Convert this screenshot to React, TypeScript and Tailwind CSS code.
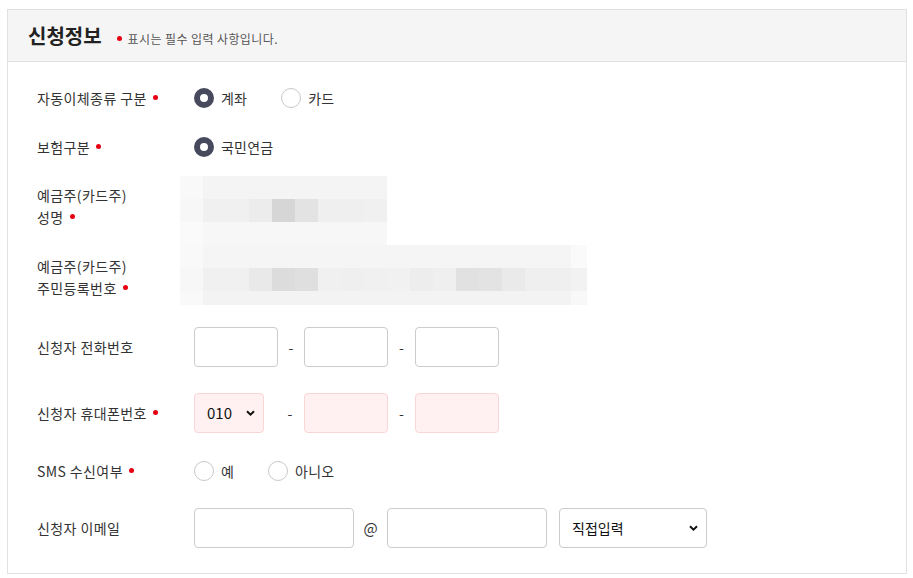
import React from 'react'

const font = "font-['Noto_Sans_CJK_KR','Noto_Sans',sans-serif]"

const Req = () => (
  <span className="ml-[6px] inline-block h-[5px] w-[5px] -translate-y-[3px] rounded-full bg-[#e60012] align-middle" />
)

interface RadioProps {
  label: string
  checked?: boolean
}

const Radio = ({ label, checked = false }: RadioProps) => (
  <label className="mr-[34px] flex items-center gap-[7px]">
    <span
      className={
        'block h-[20px] w-[20px] rounded-full ' +
        (checked ? 'border-[6px] border-[#464a5c] bg-white' : 'border border-[#c9c9c9] bg-white')
      }
    />
    <span className="text-[14px] leading-[20px] tracking-[0.2px] text-[#333]">{label}</span>
  </label>
)

const Chevron = () => (
  <svg width="9" height="6" viewBox="0 0 9 6" className="pointer-events-none absolute top-1/2 right-[9px] -translate-y-1/2">
    <path d="M1 1.2 L4.5 4.6 L8 1.2" fill="none" stroke="#111" strokeWidth="2" />
  </svg>
)

const Box = ({ w, pink = false }: { w: string; pink?: boolean }) => (
  <input
    className={
      'h-[40px] rounded-[4px] border outline-none ' +
      w +
      (pink ? ' border-[#fbd6d6] bg-[#fff1f1]' : ' border-[#cccccc] bg-white')
    }
  />
)

// pixelated blur cells (23px each)
const blurTop = [
  ['bg-[#f9f9f9]', 'bg-[#f4f4f4]', 'bg-[#f4f4f4]', 'bg-[#f4f4f4]', 'bg-[#f4f4f4]', 'bg-[#f4f4f4]', 'bg-[#f4f4f4]', 'bg-[#f4f4f4]', 'bg-[#f4f4f4]'],
  ['bg-[#f7f7f7]', 'bg-[#f0f0f0]', 'bg-[#f0f0f0]', 'bg-[#ececec]', 'bg-[#d6d6d6]', 'bg-[#e3e3e3]', 'bg-[#efefef]', 'bg-[#efefef]', 'bg-[#f0f0f0]'],
  ['bg-[#fafafa]', 'bg-[#f7f7f7]', 'bg-[#f7f7f7]', 'bg-[#f7f7f7]', 'bg-[#f7f7f7]', 'bg-[#f7f7f7]', 'bg-[#f7f7f7]', 'bg-[#f7f7f7]', 'bg-[#f7f7f7]'],
]

const blurBottom = [
  ['bg-[#f9f9f9]', 'bg-[#f5f5f5]', 'bg-[#f5f5f5]', 'bg-[#f5f5f5]', 'bg-[#f5f5f5]', 'bg-[#f5f5f5]', 'bg-[#f5f5f5]', 'bg-[#f5f5f5]', 'bg-[#f5f5f5]', 'bg-[#f5f5f5]', 'bg-[#f5f5f5]', 'bg-[#f5f5f5]', 'bg-[#f5f5f5]', 'bg-[#f5f5f5]', 'bg-[#f5f5f5]', 'bg-[#f5f5f5]', 'bg-[#f5f5f5]', 'bg-[#fafafa]'],
  ['bg-[#f7f7f7]', 'bg-[#f0f0f0]', 'bg-[#f0f0f0]', 'bg-[#e9e9e9]', 'bg-[#dcdcdc]', 'bg-[#dfdfdf]', 'bg-[#f0f0f0]', 'bg-[#efefef]', 'bg-[#f0f0f0]', 'bg-[#f1f1f1]', 'bg-[#ededed]', 'bg-[#efefef]', 'bg-[#e1e1e1]', 'bg-[#e3e3e3]', 'bg-[#e9eae9]', 'bg-[#efefef]', 'bg-[#efefef]', 'bg-[#f2f2f2]'],
  ['bg-[#f9f9f9]', 'bg-[#f3f3f3]', 'bg-[#f3f3f3]', 'bg-[#f3f3f3]', 'bg-[#f3f3f3]', 'bg-[#f3f3f3]', 'bg-[#f3f3f3]', 'bg-[#f3f3f3]', 'bg-[#f3f3f3]', 'bg-[#f3f3f3]', 'bg-[#f3f3f3]', 'bg-[#f3f3f3]', 'bg-[#f3f3f3]', 'bg-[#f3f3f3]', 'bg-[#f3f3f3]', 'bg-[#f3f3f3]', 'bg-[#f3f3f3]', 'bg-[#f8f8f8]'],
]

const Blur = ({ rows, heights, last }: { rows: string[][]; heights: string[]; last: string }) => (
  <div className="-ml-[14px] flex flex-col">
    {rows.map((row, i) => (
      <div key={i} className={'flex ' + heights[i]}>
        {row.map((c, j) => (
          <div key={j} className={c + ' h-full ' + (j === row.length - 1 ? last : 'w-[23px]')} />
        ))}
      </div>
    ))}
  </div>
)

const Label = ({ children, className = '' }: { children: React.ReactNode; className?: string }) => (
  <div className={'w-[157px] shrink-0 text-[14px] leading-[22px] tracking-[0.4px] text-[#333] ' + className}>
    {children}
  </div>
)

export default function App() {
  return (
    <div className={'min-h-[578px] bg-white pt-[9px] pl-[7px] ' + font}>
      <div className="w-[900px] border border-[#e1e1e1]">
        {/* header */}
        <div className="flex h-[52px] items-center border-b border-[#e1e1e1] bg-[#f5f5f5] pl-[20px]">
          <h2 className="text-[20px] leading-[24px] font-bold text-[#222]">신청정보</h2>
          <span className="ml-[15px] inline-block h-[5px] w-[5px] translate-y-[3px] rounded-full bg-[#e60012]" />
          <span className="ml-[6px] translate-y-[3px] text-[12px] leading-[16px] tracking-[0.4px] text-[#555]">
            표시는 필수 입력 사항입니다.
          </span>
        </div>

        {/* body */}
        <div className="pt-[12px] pr-[29px] pb-[25px] pl-[29px]">
          <div className="flex h-[48px] items-center">
            <Label>자동이체종류 구분<Req /></Label>
            <Radio label="계좌" checked />
            <Radio label="카드" />
          </div>

          <div className="flex h-[50px] items-center">
            <Label>보험구분<Req /></Label>
            <Radio label="국민연금" checked />
          </div>

          <div className="mt-[4px] flex h-[69px] items-start">
            <Label className="pt-[8px]">
              예금주(카드주)
              <br />
              성명<Req />
            </Label>
            <Blur rows={blurTop} heights={['h-[23px]', 'h-[23px]', 'h-[23px]']} last="w-[23px]" />
          </div>

          <div className="flex h-[60px] items-start">
            <Label className="pt-[10px]">
              예금주(카드주)
              <br />
              주민등록번호<Req />
            </Label>
            <Blur rows={blurBottom} heights={['h-[23px]', 'h-[23px]', 'h-[14px]']} last="w-[16px]" />
          </div>

          <div className="mt-[22px] flex h-[40px] items-center">
            <Label>신청자 전화번호</Label>
            <Box w="w-[84px]" />
            <span className="w-[26px] text-center text-[14px] text-[#333]">-</span>
            <Box w="w-[84px]" />
            <span className="w-[27px] text-center text-[14px] text-[#333]">-</span>
            <Box w="w-[84px]" />
          </div>

          <div className="mt-[26px] flex h-[40px] items-center">
            <Label>신청자 휴대폰번호<Req /></Label>
            <div className="relative">
              <select className="h-[40px] w-[70px] appearance-none rounded-[4px] border border-[#fbd6d6] bg-[#fff1f1] pl-[12px] text-[15px] text-[#111] outline-none">
                <option>010</option>
              </select>
              <Chevron />
            </div>
            <span className="w-[40px] pl-[12px] text-center text-[14px] text-[#333]">-</span>
            <Box w="w-[84px]" pink />
            <span className="w-[27px] text-center text-[14px] text-[#333]">-</span>
            <Box w="w-[84px]" pink />
          </div>

          <div className="mt-[18px] flex h-[40px] items-center">
            <Label>SMS 수신여부<Req /></Label>
            <Radio label="예" />
            <Radio label="아니오" />
          </div>

          <div className="mt-[17px] flex h-[40px] items-center">
            <Label>신청자 이메일</Label>
            <Box w="w-[160px]" />
            <span className="w-[33px] text-center text-[15px] text-[#333]">@</span>
            <Box w="w-[160px]" />
            <div className="relative ml-[12px]">
              <select className="h-[40px] w-[148px] appearance-none rounded-[4px] border border-[#cccccc] bg-white pl-[12px] text-[14px] text-[#111] outline-none">
                <option>직접입력</option>
              </select>
              <Chevron />
            </div>
          </div>
        </div>
      </div>
    </div>
  )
}
